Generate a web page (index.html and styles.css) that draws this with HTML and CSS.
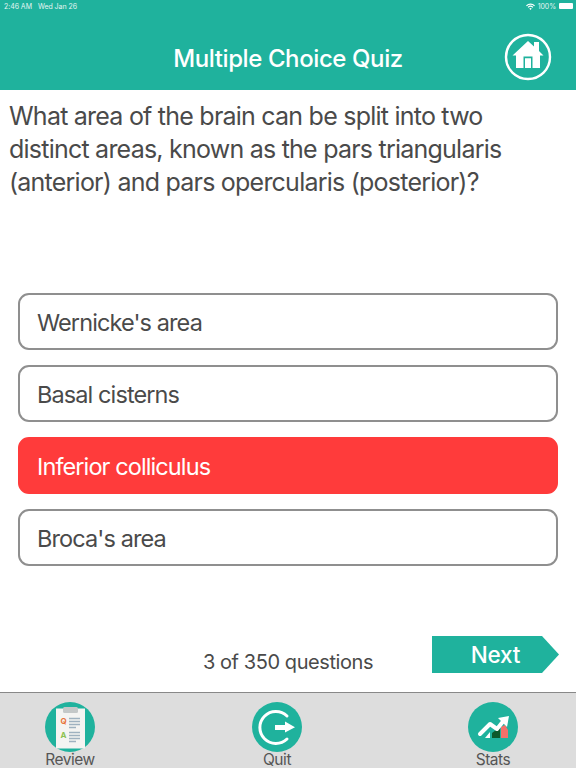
FILE: index.html
```html
<!DOCTYPE html>
<html lang="en">
<head>
    <meta charset="UTF-8">
    <meta name="viewport" content="width=device-width, initial-scale=1.0">
    <title>Multiple Choice Quiz</title>
    <link rel="stylesheet" href="styles.css">
</head>
<body>
    <header class="top">
        <div class="status">
            <span>2:46 AM</span>
            <span>Wed Jan 26</span>
            <span class="status-right">
                <svg class="wifi" viewBox="0 0 12 9" width="9" height="7">
                    <path d="M0 3 A8.5 8.5 0 0 1 12 3 L10.8 4.2 A6.8 6.8 0 0 0 1.2 4.2Z" fill="#fff"/>
                    <path d="M2.2 5.2 A5.4 5.4 0 0 1 9.8 5.2 L8.7 6.3 A3.8 3.8 0 0 0 3.3 6.3Z" fill="#fff"/>
                    <path d="M4.3 7.3 A2.4 2.4 0 0 1 7.7 7.3 L6 9Z" fill="#fff"/>
                </svg>
                <span>100%</span>
                <span class="battery"></span>
            </span>
        </div>
        <div class="title-row">
            <h1>Multiple Choice Quiz</h1>
            <svg class="home" viewBox="0 0 48 48" width="48" height="48">
                <circle cx="24" cy="24" r="22" fill="none" stroke="#fff" stroke-width="2.4"/>
                <path d="M8.5 22.5 L24 8 L30 13.5 V9 H35 V18 L39.5 22.5 H36 V35 H12 V22.5Z" fill="#fff"/>
                <path d="M19.5 35 V23.5 H28.5 V35 H27 V25.2 H21 V35Z" fill="#1fb29d"/>
            </svg>
        </div>
    </header>

    <main class="quiz">
        <p class="question">What area of the brain can be split into two distinct areas, known as the pars triangularis (anterior) and pars opercularis (posterior)?</p>

        <div class="answers">
            <div class="answer">Wernicke's area</div>
            <div class="answer">Basal cisterns</div>
            <div class="answer wrong">Inferior colliculus</div>
            <div class="answer">Broca's area</div>
        </div>

        <div class="progress-row">
            <span class="progress">3 of 350 questions</span>
            <div class="next">Next</div>
        </div>
    </main>

    <footer class="tabs">
        <div class="tab">
            <svg class="tab-icon" viewBox="0 0 50 50" width="50" height="50">
                <circle cx="25" cy="25" r="25" fill="#1fb29d"/>
                <rect x="11" y="6.5" width="29" height="40" fill="#f4f4f2"/>
                <rect x="18" y="5" width="15" height="6" rx="1.5" fill="#c4c8c8"/>
                <text x="15.5" y="22" class="qa qa-q">Q</text>
                <text x="15.5" y="36" class="qa qa-a">A</text>
                <path d="M24 16.5 H35 M24 19.5 H35 M24 22.5 H35 M24 25.5 H31 M24 30.5 H35 M24 33.5 H35 M24 36.5 H35 M24 39.5 H31" stroke="#9fb2c0" stroke-width="1.3"/>
            </svg>
            <span class="tab-label">Review</span>
        </div>
        <div class="tab">
            <svg class="tab-icon" viewBox="0 0 50 50" width="50" height="50">
                <circle cx="25" cy="25" r="25" fill="#1fb29d"/>
                <path d="M35 14 A16 16 0 1 0 35 37" fill="none" stroke="#fff" stroke-width="3" stroke-linecap="round"/>
                <path d="M23 23 H33 V19.5 L43 25.3 L33 30.5 V28 H23Z" fill="#fff"/>
            </svg>
            <span class="tab-label">Quit</span>
        </div>
        <div class="tab">
            <svg class="tab-icon" viewBox="0 0 50 50" width="50" height="50">
                <circle cx="25" cy="25" r="25" fill="#1fb29d"/>
                <path d="M17 36 L22 30 V36Z" fill="#fff"/>
                <path d="M24 31 L32 25 V36 H24Z" fill="#0d5a2c"/>
                <path d="M33 25 L37 23 L40 28 V36 H33Z" fill="#f2716a"/>
                <path d="M12 32 L22 22 L29 27 L37 17" fill="none" stroke="#fff" stroke-width="4" stroke-linejoin="round" stroke-linecap="round"/>
                <path d="M30 16 L41 14 L39 25Z" fill="#fff"/>
            </svg>
            <span class="tab-label">Stats</span>
        </div>
    </footer>
</body>
</html>
```

FILE: styles.css
```css
* {
    box-sizing: border-box;
}

body {
    font-family: Inter, 'Liberation Sans', sans-serif;
    margin: 0;
    height: 768px;
    overflow: hidden;
    display: flex;
    flex-direction: column;
    background-color: #ffffff;
    color: #4a4a4a;
}

.top {
    height: 90px;
    background-color: #1fb29d;
    color: #ffffff;
}

.status {
    display: flex;
    gap: 6px;
    height: 12px;
    padding: 0 3px 0 4px;
    font-size: 7px;
    line-height: 13px;
    letter-spacing: -0.05px;
    color: #e4f5f2;
}

.status-right {
    margin-left: auto;
    display: flex;
    align-items: center;
    gap: 3px;
}

.battery {
    width: 14px;
    height: 6px;
    background-color: #ffffff;
    border-radius: 1px;
}

.title-row {
    position: relative;
    height: 78px;
    display: flex;
    align-items: center;
    justify-content: center;
    padding-top: 14px;
}

h1 {
    margin: 0;
    font-size: 24px;
    font-weight: 500;
    letter-spacing: -0.4px;
}

.home {
    position: absolute;
    right: 24px;
    top: 21px;
}

.quiz {
    flex: 1;
    display: flex;
    flex-direction: column;
}

.question {
    margin: 10px 0 0;
    padding: 0 9px;
    font-size: 25px;
    line-height: 33px;
    letter-spacing: -0.77px;
    height: 193px;
}

.answers {
    display: flex;
    flex-direction: column;
    gap: 15px;
    padding: 0 18px;
}

.answer {
    height: 57px;
    display: flex;
    align-items: center;
    padding: 2px 0 0 17px;
    border: 2px solid #8f8f8f;
    border-radius: 11px;
    font-size: 23.5px;
    letter-spacing: -0.9px;
}

.wrong {
    background-color: #ff3b3b;
    border-color: #ff3b3b;
    color: #ffffff;
}

.progress-row {
    position: relative;
    margin-top: 70px;
    height: 37px;
    display: flex;
    align-items: center;
    justify-content: center;
    padding-top: 14px;
}

.progress {
    font-size: 20px;
    letter-spacing: -0.42px;
}

.next {
    position: absolute;
    left: 432px;
    top: 0;
    width: 127px;
    height: 37px;
    display: flex;
    align-items: center;
    justify-content: center;
    background-color: #1fb29d;
    color: #ffffff;
    font-size: 22.5px;
    font-weight: 500;
    letter-spacing: -0.2px;
    clip-path: polygon(0 0, 110px 0, 100% 50%, 110px 100%, 0 100%);
}

.tabs {
    height: 76px;
    background-color: #dddddd;
    border-top: 1px solid #888888;
    display: grid;
    grid-template-columns: 140px 274px 158px;
    padding: 9px 0 0;
}

.tab {
    display: flex;
    flex-direction: column;
    align-items: center;
}

.tab-icon {
    flex: none;
}

.tab-label {
    font-size: 15.5px;
    line-height: 16px;
    letter-spacing: -0.45px;
    color: #555555;
}

.qa {
    font-size: 8px;
    font-weight: 700;
}

.qa-q {
    fill: #e8743b;
}

.qa-a {
    fill: #8cc152;
}
```
